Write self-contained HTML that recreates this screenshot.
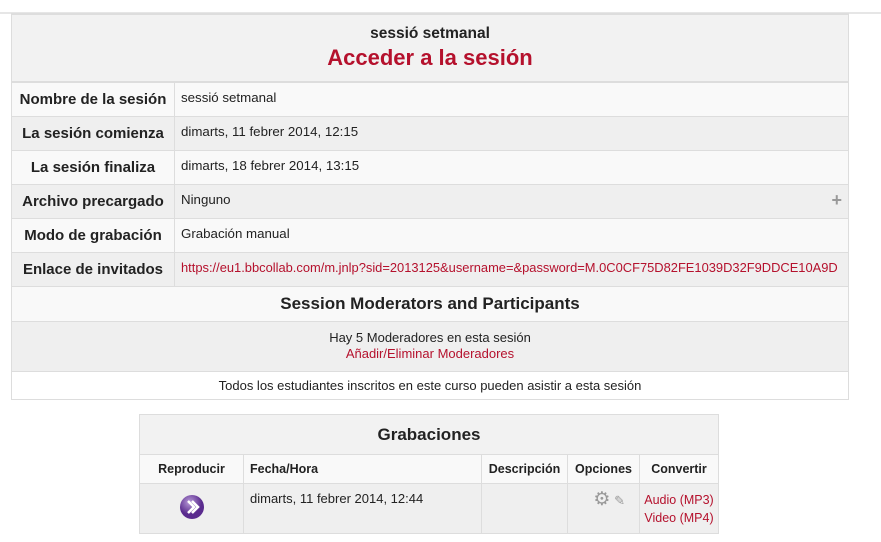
<!DOCTYPE html>
<html><head><meta charset="utf-8"><style>
body{margin:0;width:881px;height:542px;background:#fff;font-family:"Liberation Sans",Arial,sans-serif;color:#222;position:relative;overflow:hidden}
.topline{position:absolute;left:0;top:12px;width:881px;height:2px;background:#e6e6e6}
table{border-collapse:collapse;position:absolute}
td,th{border:1px solid #ddd;padding:0}
#m{left:11px;top:13px;width:838px;table-layout:fixed}
#m td.l{text-align:center;font-weight:bold;font-size:15px;white-space:nowrap}
#m td.v{font-size:13.3px;padding-left:6px;overflow:hidden}
.a td{background:#f9f9f9}.b td{background:#efefef}
a{color:#b5112d;text-decoration:none}
#g{left:139px;top:414px;width:580px;font-size:13px}
#g th{font-size:12.5px}
</style></head><body>
<div class="topline"></div>
<table id="m">
<colgroup><col style="width:163px"><col></colgroup>
<tr><td colspan="2" style="height:66px;background:#f2f2f2;text-align:center;border-top:2px solid #ddd;border-bottom:2px solid #ddd"><div style="font-weight:bold;font-size:15.5px;margin-top:0px">sessió setmanal</div><div style="font-weight:bold;font-size:22px;color:#b5112d;margin-top:2px">Acceder a la sesión</div></td></tr>
<tr class="a" style="height:34px"><td class="l">Nombre de la sesión</td><td class="v" style="vertical-align:top;padding-top:7px">sessió setmanal</td></tr>
<tr class="b" style="height:34px"><td class="l">La sesión comienza</td><td class="v" style="vertical-align:top;padding-top:7px">dimarts, 11 febrer 2014, 12:15</td></tr>
<tr class="a" style="height:34px"><td class="l">La sesión finaliza</td><td class="v" style="vertical-align:top;padding-top:7px">dimarts, 18 febrer 2014, 13:15</td></tr>
<tr class="b" style="height:34px"><td class="l">Archivo precargado</td><td class="v" style="vertical-align:top;padding-top:7px;position:relative">Ninguno<span style="position:absolute;right:6px;top:5px;color:#999;font-size:18px;font-weight:bold">+</span></td></tr>
<tr class="a" style="height:34px"><td class="l">Modo de grabación</td><td class="v" style="vertical-align:top;padding-top:7px">Grabación manual</td></tr>
<tr class="b" style="height:34px"><td class="l">Enlace de invitados</td><td class="v" style="vertical-align:top;padding-top:7px;white-space:nowrap;font-size:12.9px"><a>https://eu1.bbcollab.com/m.jnlp?sid=2013125&amp;username=&amp;password=M.0C0CF75D82FE1039D32F9DDCE10A9D</a></td></tr>
<tr class="a" style="height:35px"><td colspan="2" style="text-align:center;font-weight:bold;font-size:17px">Session Moderators and Participants</td></tr>
<tr class="b" style="height:50px"><td colspan="2" style="text-align:center;font-size:13px;line-height:16px">Hay 5 Moderadores en esta sesión<br><a>Añadir/Eliminar Moderadores</a></td></tr>
<tr class="a" style="height:28px"><td colspan="2" style="text-align:center;font-size:13px;background:#fff">Todos los estudiantes inscritos en este curso pueden asistir a esta sesión</td></tr>
</table>
<table id="g">
<tr style="height:40px"><th colspan="5" style="background:#f2f2f2;font-size:17px">Grabaciones</th></tr>
<tr style="height:29px;background:#f9f9f9"><th style="width:103px">Reproducir</th><th style="width:231px;text-align:left;padding-left:6px">Fecha/Hora</th><th style="width:85px">Descripción</th><th style="width:71px">Opciones</th><th>Convertir</th></tr>
<tr style="height:50px;background:#efefef"><td style="text-align:center"><svg width="26" height="26" viewBox="0 0 26 26"><defs><radialGradient id="r" cx="40%" cy="30%"><stop offset="0" stop-color="#b89ad8"/><stop offset="1" stop-color="#5a2b8e"/></radialGradient></defs><circle cx="13" cy="13" r="12" fill="url(#r)"/><path d="M9 7l6 6-6 6M13 7l6 6-6 6" stroke="#fff" stroke-width="2.5" fill="none"/></svg></td><td style="vertical-align:top;padding:7px 6px">dimarts, 11 febrer 2014, 12:44</td><td></td><td style="vertical-align:top;text-align:right;padding:4px 14px 0 0;color:#999"><span style="font-size:19px">⚙</span> <span style="font-size:13px">✎</span></td><td style="text-align:center;line-height:18px;font-size:12.5px"><a>Audio (MP3)</a><br><a>Video (MP4)</a></td></tr>
</table>
</body></html>
